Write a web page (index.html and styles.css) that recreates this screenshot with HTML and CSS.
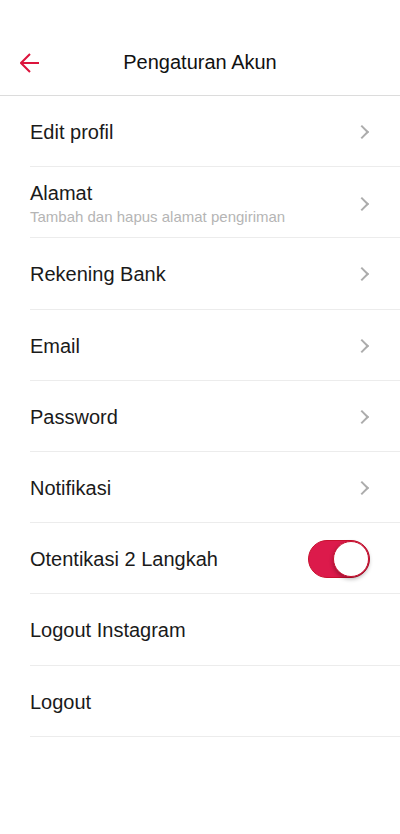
FILE: index.html
```html
<!DOCTYPE html>
<html lang="id">
<head>
  <meta charset="UTF-8">
  <title>Pengaturan Akun</title>
  <link rel="stylesheet" href="styles.css">
</head>
<body>

<div class="topbar">
  <a class="back" href="#">
    <svg width="20" height="20" viewBox="0 0 20 20">
      <path d="M1 10 H19 M10 1 L1 10 L10 19" fill="none" stroke="#dc143c" stroke-width="2" />
    </svg>
  </a>
  <h1>Pengaturan Akun</h1>
  <span></span>
</div>

<ul class="menu">
  <li class="menu-item">
    <div class="label">Edit profil</div>
    <span class="chevron"></span>
  </li>
  <li class="menu-item address">
    <div class="label">
      Alamat
      <small>Tambah dan hapus alamat pengiriman</small>
    </div>
    <span class="chevron"></span>
  </li>
  <li class="menu-item">
    <div class="label">Rekening Bank</div>
    <span class="chevron"></span>
  </li>
  <li class="menu-item">
    <div class="label">Email</div>
    <span class="chevron"></span>
  </li>
  <li class="menu-item">
    <div class="label">Password</div>
    <span class="chevron"></span>
  </li>
  <li class="menu-item">
    <div class="label">Notifikasi</div>
    <span class="chevron"></span>
  </li>
  <li class="menu-item">
    <div class="label">Otentikasi 2 Langkah</div>
    <label class="switch">
      <input type="checkbox" checked>
      <span class="slider"></span>
    </label>
  </li>
  <li class="menu-item">
    <div class="label">Logout Instagram</div>
  </li>
  <li class="menu-item">
    <div class="label">Logout</div>
  </li>
</ul>

</body>
</html>
```

FILE: styles.css
```css
body {
  margin: 0;
  padding: 0;
  font-family: 'Liberation Sans', Arial, sans-serif;
  background: #fff;
  color: #1a1a1a;
}

.topbar {
  height: 96px;
  border-bottom: 1px solid #dcdcdc;
  display: grid;
  grid-template-columns: 60px 1fr 60px;
  align-items: center;
  padding-top: 30px;
  box-sizing: border-box;
}

.topbar h1 {
  margin: 0;
  font-size: 20px;
  font-weight: normal;
  text-align: center;
  color: #111;
}

.back {
  display: block;
  width: 20px;
  height: 20px;
  margin-left: 20px;
}

.back svg {
  display: block;
}

.menu {
  list-style: none;
  margin: 0;
  padding: 0 0 0 30px;
}

.menu-item {
  height: 71.2px;
  box-sizing: border-box;
  border-bottom: 1px solid #ececec;
  display: flex;
  align-items: center;
  justify-content: space-between;
  padding-right: 30px;
  padding-top: 2px;
}

.address {
  padding-top: 4px;
}

.label {
  font-size: 20px;
  line-height: 22px;
}

.label small {
  display: block;
  font-size: 15px;
  line-height: 18px;
  margin-top: 4px;
  color: #b5b5b5;
}

.chevron {
  width: 8px;
  height: 8px;
  border-top: 2px solid #acacac;
  border-right: 2px solid #acacac;
  transform: rotate(45deg);
  margin-right: 3px;
}

.switch {
  position: relative;
  width: 62px;
  height: 38px;
  display: block;
}

.switch input {
  display: none;
}

.slider {
  position: absolute;
  top: 0; left: 0;
  right: 0; bottom: 0;
  background: #dc1a4b;
  border: 1px solid #c8102e;
  border-radius: 19px;
  box-sizing: border-box;
}

.slider::after {
  content: "";
  position: absolute;
  top: 0;
  right: 0;
  width: 36px;
  height: 36px;
  border-radius: 50%;
  background: #fff;
  border: 1px solid #c8102e;
  box-sizing: border-box;
  box-shadow: 0 2px 4px rgba(0, 0, 0, 0.3);
}
```
